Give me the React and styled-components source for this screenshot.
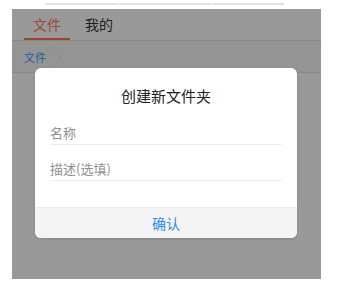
import React from "react";
import styled, { createGlobalStyle } from "styled-components";

const Global = createGlobalStyle`
  html, body { margin: 0; padding: 0; background: #ffffff; }
  body { font-family: "Noto Sans CJK SC", "Liberation Sans", sans-serif; }
  * { box-sizing: border-box; }
`;

const Root = styled.div`
  width: 348px;
  height: 290px;
  padding-top: 3px;
`;

const TopStrip = styled.div`
  display: flex;
  gap: 1px;
  margin-left: 46px;
  height: 2px;
`;

const StripSeg = styled.div`
  width: ${(p) => p.$w}px;
  height: 2px;
  background: #e2e2e2;
`;

const Screen = styled.div`
  position: relative;
  margin: 4px 0 0 12px;
  width: 309px;
  height: 270px;
  background: #ffffff;
  overflow: hidden;
`;

const TabBar = styled.div`
  display: flex;
  gap: 6px;
  height: 32px;
  padding-left: 12px;
  border-bottom: 1px solid #e2e2e2;
  background: #ffffff;
`;

const Tab = styled.div`
  width: 46px;
  height: 31px;
  display: flex;
  align-items: center;
  justify-content: center;
  font-size: 14px;
  color: ${(p) => (p.$active ? "#ff7c5e" : "#333333")};
  border-bottom: 2px solid ${(p) => (p.$active ? "#ff7454" : "transparent")};
`;

const Crumbs = styled.div`
  display: flex;
  align-items: center;
  height: 32px;
  padding-left: 12px;
  background: #f7f7f7;
  border-bottom: 1px solid #e8e8e8;
`;

const Crumb = styled.span`
  font-size: 11px;
  color: #3a9cff;
`;

const Chevron = styled.svg`
  display: block;
  margin-left: 2px;
  margin-top: 3px;
`;

const Backdrop = styled.div`
  position: absolute;
  inset: 0;
  background: rgba(0, 0, 0, 0.4);
  display: flex;
  justify-content: center;
  align-items: flex-start;
  padding: 59px 1px 0 0;
`;

const Dialog = styled.div`
  width: 262px;
  height: 170px;
  background: #ffffff;
  border-radius: 6px;
  overflow: hidden;
  display: flex;
  flex-direction: column;
  box-shadow: 0 1px 3px rgba(0, 0, 0, 0.15);
`;

const Title = styled.div`
  padding-top: 18px;
  height: 41px;
  line-height: 20px;
  text-align: center;
  font-size: 15px;
  color: #222222;
`;

const Field = styled.div`
  margin: 0 15px;
  height: 36px;
  padding-top: 15px;
  line-height: 18px;
  font-size: 13px;
  color: #8f8f8f;
  border-bottom: 1px solid #eeeeee;
`;

const Spacer = styled.div`
  flex: 1;
`;

const Footer = styled.div`
  height: 31px;
  background: #f4f4f4;
  border-top: 1px solid #ececec;
  display: flex;
  align-items: center;
  justify-content: center;
  padding-bottom: 1px;
  font-size: 14px;
  color: #2b8cf0;
`;

export default function App() {
  return (
    <>
      <Global />
      <Root>
        <TopStrip>
          <StripSeg $w={72} />
          <StripSeg $w={92} />
          <StripSeg $w={72} />
        </TopStrip>
        <Screen>
          <TabBar>
            <Tab $active>文件</Tab>
            <Tab>我的</Tab>
          </TabBar>
          <Crumbs>
            <Crumb>文件</Crumb>
            <Chevron width="14" height="27" viewBox="0 0 14 27">
              <path d="M1 0 L13 13.5 L1 27" fill="none" stroke="#e6e6e6" strokeWidth="1" />
            </Chevron>
          </Crumbs>
          <Backdrop>
            <Dialog>
              <Title>创建新文件夹</Title>
              <Field>名称</Field>
              <Field>描述(选填)</Field>
              <Spacer />
              <Footer>确认</Footer>
            </Dialog>
          </Backdrop>
        </Screen>
      </Root>
    </>
  );
}
